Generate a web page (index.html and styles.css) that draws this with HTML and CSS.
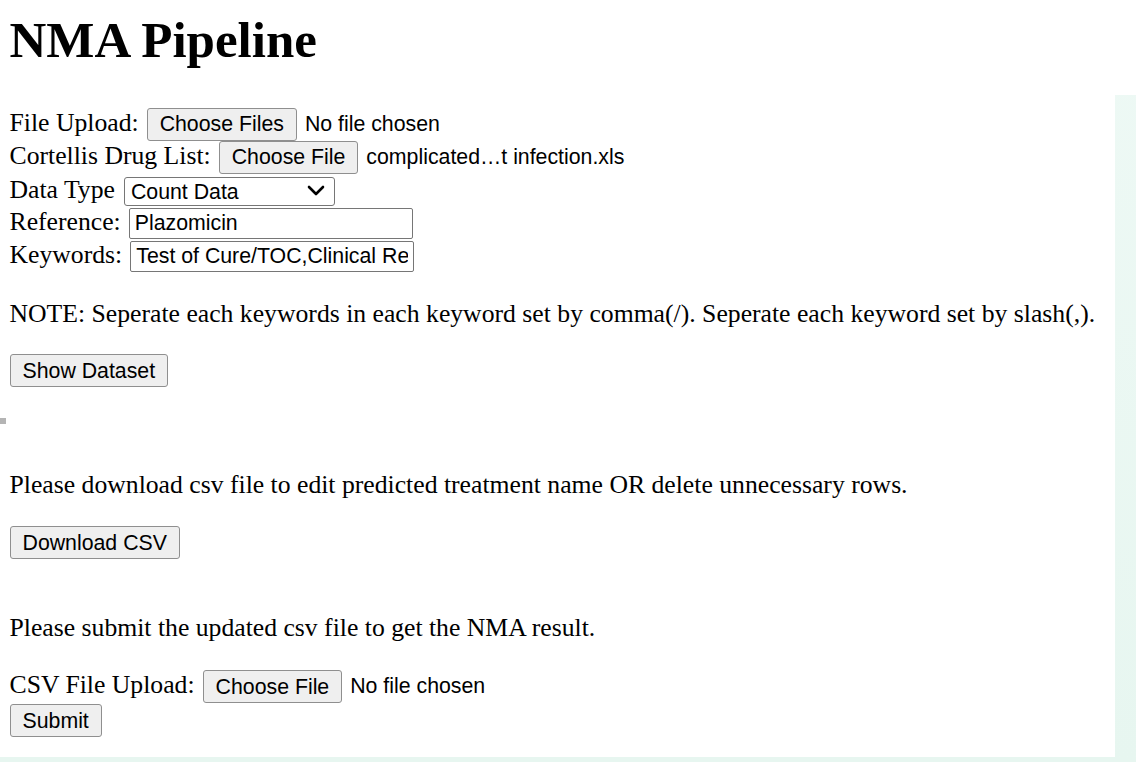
FILE: index.html
```html
<!DOCTYPE html>
<html lang="en">
<head>
<meta charset="utf-8">
<title>NMA Pipeline</title>
<link rel="stylesheet" href="styles.css">
</head>
<body>
<main class="page">
  <h1 class="title">NMA Pipeline</h1>
  <form class="form">
    <div class="row">
      <label class="label">File Upload:</label>
      <span class="file">
        <button type="button" class="btn">Choose Files</button>
        <span class="file-name">No file chosen</span>
      </span>
    </div>
    <div class="row">
      <label class="label">Cortellis Drug List:</label>
      <span class="file">
        <button type="button" class="btn">Choose File</button>
        <span class="file-name">complicated…t infection.xls</span>
      </span>
    </div>
    <div class="row row-select">
      <label class="label label-select">Data Type</label>
      <span class="select">
        <select class="select-input">
          <option>Count Data</option>
        </select>
        <svg class="chevron" viewBox="0 0 18 11" width="18" height="11" aria-hidden="true">
          <path d="M2 2 L9 9 L16 2" fill="none" stroke="#000" stroke-width="2.6" stroke-linecap="round" stroke-linejoin="round"/>
        </svg>
      </span>
    </div>
    <div class="row">
      <label class="label">Reference:</label>
      <input class="text-input" type="text" value="Plazomicin">
    </div>
    <div class="row">
      <label class="label">Keywords:</label>
      <input class="text-input" type="text" value="Test of Cure/TOC,Clinical Response">
    </div>
  </form>

  <p class="text note">NOTE: Seperate each keywords in each keyword set by comma(/). Seperate each keyword set by slash(,).</p>
  <div class="action action-show"><button type="button" class="btn">Show Dataset</button></div>

  <p class="text download-text">Please download csv file to edit predicted treatment name OR delete unnecessary rows.</p>
  <div class="action action-download"><button type="button" class="btn">Download CSV</button></div>

  <p class="text submit-text">Please submit the updated csv file to get the NMA result.</p>
  <div class="row csv-row">
    <label class="label">CSV File Upload:</label>
    <span class="file">
      <button type="button" class="btn">Choose File</button>
      <span class="file-name">No file chosen</span>
    </span>
  </div>
  <div class="action action-submit"><button type="button" class="btn">Submit</button></div>
</main>
<div class="edge-mark"></div>
</body>
</html>
```

FILE: styles.css
```css
html, body {
  margin: 0;
  padding: 0;
}

body {
  width: 1136px;
  height: 762px;
  overflow: hidden;
  position: relative;
  font-family: "Liberation Serif", "Times New Roman", serif;
  font-size: 25.7px;
  color: #000;
  background:
    linear-gradient(to bottom, #ffffff 0, #ffffff 95px, rgba(255,255,255,0) 95px),
    linear-gradient(to bottom, #eef9f5, #e7f6f0);
}

.page {
  display: flow-root;
  box-sizing: border-box;
  width: 1115px;
  height: 757px;
  padding: 11px 0 0 9.5px;
  background: #ffffff;
}

.title {
  margin: 0;
  font-size: 51px;
  line-height: 58px;
  font-weight: bold;
}

.form {
  margin: 38.5px 0 0;
}

.row {
  display: flex;
  align-items: center;
  gap: 8px;
  height: 33px;
}

.row-select {
  gap: 9px;
}

.label {
  white-space: nowrap;
  padding-bottom: 2px;
}

.label-select {
  padding-bottom: 0;
}

.file {
  display: flex;
  align-items: center;
  gap: 8px;
}

.file-name {
  font-family: "Liberation Sans", Arial, sans-serif;
  font-size: 21.3px;
  white-space: nowrap;
  padding-top: 1px;
}

.btn {
  box-sizing: border-box;
  height: 33px;
  margin: 0;
  padding: 2px 12px 0;
  border: 1.5px solid #8f8f8f;
  border-radius: 3px;
  background: #efefef;
  color: #000;
  font-family: "Liberation Sans", Arial, sans-serif;
  font-size: 21.3px;
  line-height: 1;
  white-space: nowrap;
}

.select {
  position: relative;
  display: block;
  width: 211px;
  height: 29px;
}

.select-input {
  -webkit-appearance: none;
  appearance: none;
  box-sizing: border-box;
  width: 100%;
  height: 100%;
  margin: 0;
  padding: 1px 0 0 6px;
  border: 1.5px solid #767676;
  border-radius: 3px;
  background: #fff;
  color: #000;
  font-family: "Liberation Sans", Arial, sans-serif;
  font-size: 21.3px;
}

.chevron {
  position: absolute;
  right: 10px;
  top: 9px;
  pointer-events: none;
}

.text-input {
  box-sizing: border-box;
  width: 284px;
  height: 31px;
  margin: 0;
  padding: 1px 5px 0;
  border: 1.5px solid #767676;
  border-radius: 2px;
  background: #fff;
  color: #000;
  font-family: "Liberation Sans", Arial, sans-serif;
  font-size: 21.3px;
}

.text {
  margin: 0;
  line-height: 29px;
  white-space: nowrap;
}

.note {
  margin-top: 26.2px;
}

.action {
  display: flex;
}

.action-show {
  margin-top: 26.3px;
}

.download-text {
  margin-top: 83px;
}

.action-download {
  margin-top: 27px;
}

.submit-text {
  margin-top: 54.5px;
}

.csv-row {
  margin-top: 27.3px;
}

.action-submit {
  margin-top: 1px;
}

.edge-mark {
  position: absolute;
  left: 0;
  top: 418px;
  width: 6px;
  height: 6px;
  background: #b4b4b4;
}
```
